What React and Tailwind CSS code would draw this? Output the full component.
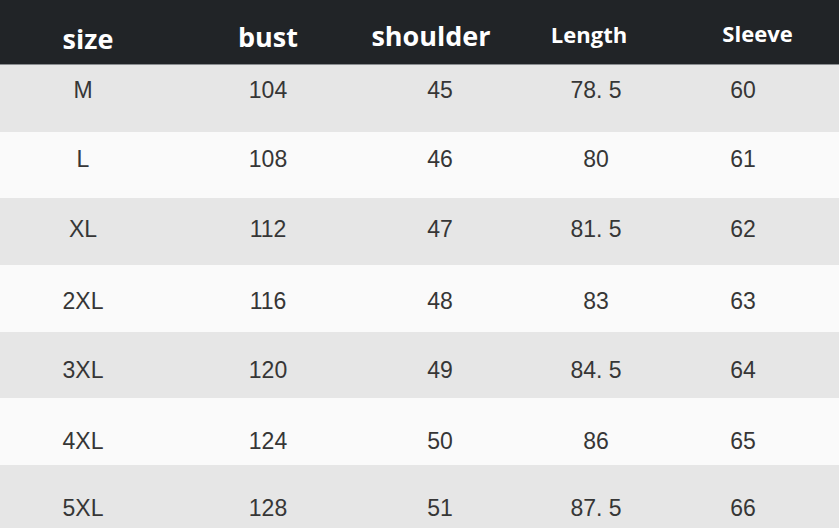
const headers = [
  { label: 'size', cls: 'w-[176px] text-[27px] pt-[25px]' },
  { label: 'bust', cls: 'w-[184px] text-[27px] pt-[23px]' },
  { label: 'shoulder', cls: 'w-[142px] text-[27px] pt-[22px]' },
  { label: 'Length', cls: 'w-[174px] text-[22px] pt-[20px]' },
  { label: 'Sleeve', cls: 'w-[163px] text-[22px] pt-[19px]' },
];

const colWidths = ['w-[166px]', 'w-[204px]', 'w-[140px]', 'w-[172px]', 'w-[122px]'];

const rows = [
  { cells: ['M', '104', '45', '78. 5', '60'], bg: 'bg-[#e6e6e6]', h: 'h-[67px]', pt: 'pt-[11px]' },
  { cells: ['L', '108', '46', '80', '61'], bg: 'bg-[#fafafa]', h: 'h-[66px]', pt: 'pt-[13px]' },
  { cells: ['XL', '112', '47', '81. 5', '62'], bg: 'bg-[#e6e6e6]', h: 'h-[67px]', pt: 'pt-[17px]' },
  { cells: ['2XL', '116', '48', '83', '63'], bg: 'bg-[#fafafa]', h: 'h-[67px]', pt: 'pt-[22px]' },
  { cells: ['3XL', '120', '49', '84. 5', '64'], bg: 'bg-[#e6e6e6]', h: 'h-[66px]', pt: 'pt-[24px]' },
  { cells: ['4XL', '124', '50', '86', '65'], bg: 'bg-[#fafafa]', h: 'h-[67px]', pt: 'pt-[29px]' },
  { cells: ['5XL', '128', '51', '87. 5', '66'], bg: 'bg-[#e6e6e6]', h: 'h-[70px]', pt: 'pt-[29px]' },
];

export default function App() {
  return (
    <div className="w-[839px] h-[528px] overflow-hidden bg-[#fafafa]">
      {/* Header */}
      <div className="flex h-[65px] bg-[#212427] border-b border-[#8a8d90] font-['Open_Sans',sans-serif] font-bold text-white">
        {headers.map((h) => (
          <div key={h.label} className={`${h.cls} text-center leading-[28px]`}>
            {h.label}
          </div>
        ))}
      </div>

      {/* Rows */}
      {rows.map((row) => (
        <div key={row.cells[0]} className={`flex ${row.bg} ${row.h}`}>
          {row.cells.map((c, i) => (
            <div
              key={i}
              className={`${colWidths[i]} ${row.pt} text-center text-[23px] leading-[28px] text-[#363636] font-['Liberation_Sans',Arial,sans-serif]`}
            >
              {c}
            </div>
          ))}
        </div>
      ))}
    </div>
  );
}
